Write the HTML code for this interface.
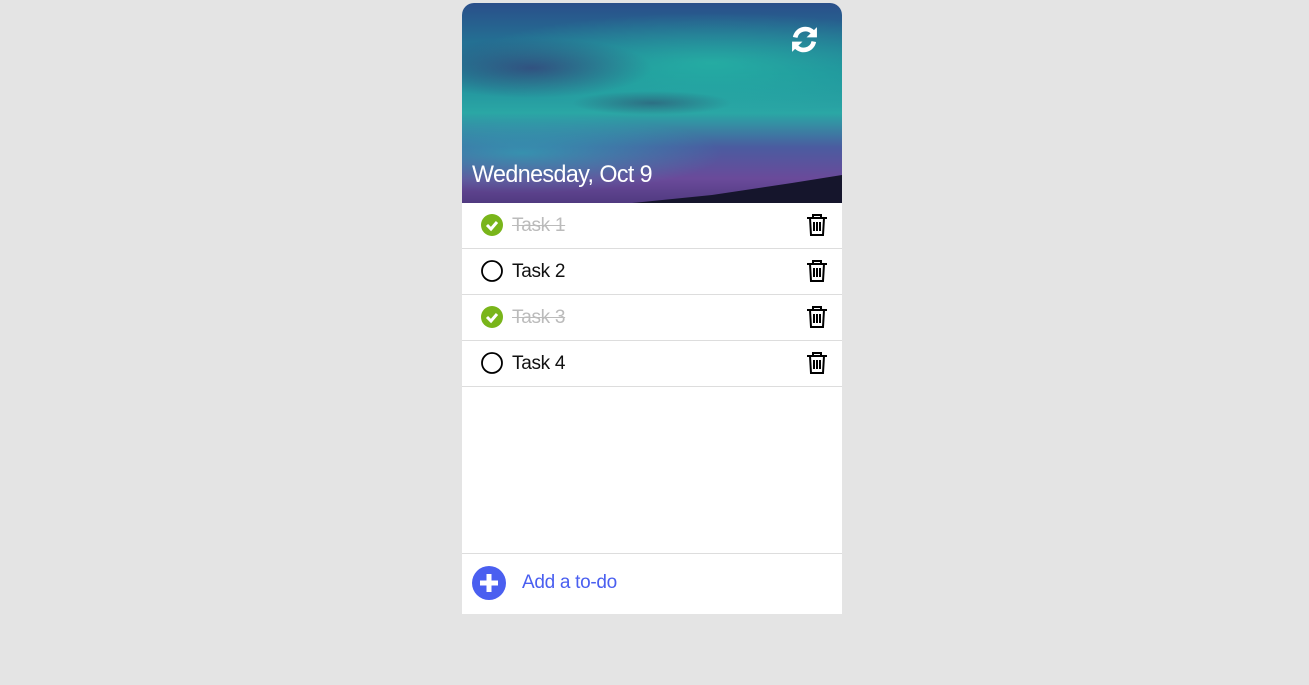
<!DOCTYPE html>
<html><head><style>
body{margin:0;background:#e4e4e4;font-family:"Liberation Sans",sans-serif;width:1309px;height:685px;overflow:hidden}
.card{position:absolute;left:462px;top:3px;width:380px;height:611px;background:#fff;border-radius:12px 12px 0 0;overflow:hidden}
.hdr{position:absolute;left:0;top:0;width:380px;height:200px;
background:
radial-gradient(ellipse 120px 30px at 70px 65px,rgba(60,40,110,.6),transparent),
radial-gradient(ellipse 80px 12px at 190px 100px,rgba(50,60,100,.5),transparent),
radial-gradient(ellipse 250px 50px at 250px 60px,rgba(40,200,170,.6),transparent),
radial-gradient(ellipse 200px 40px at 60px 150px,rgba(30,200,190,.5),transparent),
linear-gradient(180deg,#2a4f8a 0%,#1f8a9a 35%,#2aa7a5 55%,#4a5ca0 72%,#6a4a9a 88%,#503a80 100%)}
.date{position:absolute;left:10px;top:158px;color:#fff;font-size:24px;letter-spacing:-0.6px;transform:scaleX(.97);transform-origin:left}
.row{position:absolute;left:0;width:380px;height:45px;border-bottom:1px solid #ddd}
.row .t{position:absolute;left:50px;top:12px;font-size:19px;color:#111;letter-spacing:-0.3px}
.row.done .t{color:#bbb;text-decoration:line-through}
.chk{position:absolute;left:19px;top:11px}
.trash{position:absolute;left:344px;top:10px}
.foot{position:absolute;left:0;top:550px;width:380px;height:61px;border-top:1px solid #ddd}
.foot .t{position:absolute;left:60px;top:18px;font-size:19px;color:#4a5ff0;letter-spacing:-0.3px}
</style></head><body>
<div class="card">
<div class="hdr">
<svg style="position:absolute;left:0;top:160px" width="380" height="40"><path d="M170 40 L250 32 L330 20 L380 12 L380 40Z" fill="#15152c"/></svg>
<svg style="position:absolute;left:328px;top:22px" width="29" height="29" viewBox="0 0 28 28" fill="none" stroke="#fff" stroke-width="4.5"><path d="M5 12a10 10 0 0 1 17-5"/><path d="M23 16a10 10 0 0 1-17 5"/><path d="M26 2v10h-10z" fill="#fff" stroke-width="0"/><path d="M2 26v-10h10z" fill="#fff" stroke-width="0"/></svg>
<div class="date">Wednesday, Oct 9</div></div>
<div class="row done" style="top:200px"><svg class="chk" width="22" height="22"><circle cx="11" cy="11" r="11" fill="#79b51a"/><path d="M6 11l4 4 6-7" stroke="#fff" stroke-width="3" fill="none"/></svg><span class="t">Task 1</span><svg class="trash" width="22" height="24" viewBox="0 0 22 24" fill="none" stroke="#000" stroke-width="2"><path d="M1 5h20M7 5V2h8v3M4 5l1 17h12l1-17M8 9v9M11 9v9M14 9v9"/></svg></div>
<div class="row" style="top:246px"><svg class="chk" width="22" height="22"><circle cx="11" cy="11" r="10" fill="none" stroke="#000" stroke-width="1.8"/></svg><span class="t">Task 2</span><svg class="trash" width="22" height="24" viewBox="0 0 22 24" fill="none" stroke="#000" stroke-width="2"><path d="M1 5h20M7 5V2h8v3M4 5l1 17h12l1-17M8 9v9M11 9v9M14 9v9"/></svg></div>
<div class="row done" style="top:292px"><svg class="chk" width="22" height="22"><circle cx="11" cy="11" r="11" fill="#79b51a"/><path d="M6 11l4 4 6-7" stroke="#fff" stroke-width="3" fill="none"/></svg><span class="t">Task 3</span><svg class="trash" width="22" height="24" viewBox="0 0 22 24" fill="none" stroke="#000" stroke-width="2"><path d="M1 5h20M7 5V2h8v3M4 5l1 17h12l1-17M8 9v9M11 9v9M14 9v9"/></svg></div>
<div class="row" style="top:338px"><svg class="chk" width="22" height="22"><circle cx="11" cy="11" r="10" fill="none" stroke="#000" stroke-width="1.8"/></svg><span class="t">Task 4</span><svg class="trash" width="22" height="24" viewBox="0 0 22 24" fill="none" stroke="#000" stroke-width="2"><path d="M1 5h20M7 5V2h8v3M4 5l1 17h12l1-17M8 9v9M11 9v9M14 9v9"/></svg></div>
<div class="foot"><svg style="position:absolute;left:10px;top:12px" width="34" height="34"><circle cx="17" cy="17" r="17" fill="#4a5ff0"/><path d="M17 8v18M8 17h18" stroke="#fff" stroke-width="5"/></svg><span class="t">Add a to-do</span></div>
</div>
</body></html>
